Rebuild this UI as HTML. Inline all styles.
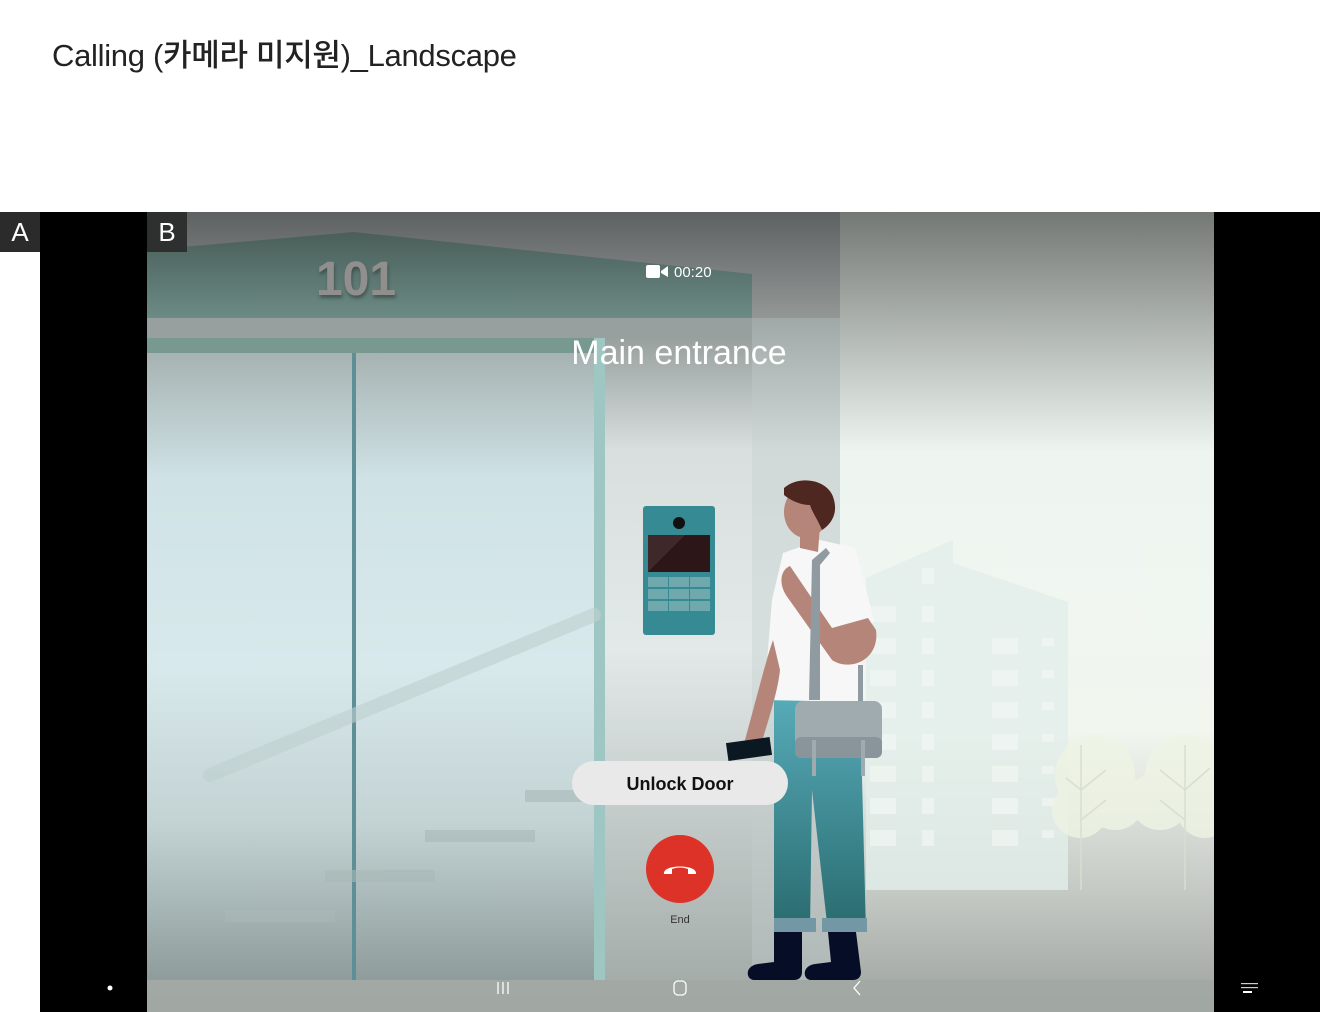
<!DOCTYPE html>
<html><head><meta charset="utf-8"><style>
html,body{margin:0;padding:0;background:#fff;width:1320px;height:1012px;overflow:hidden;font-family:"Liberation Sans","Noto Sans CJK KR",sans-serif;position:relative}
.title{position:absolute;left:52px;top:30px;font-size:31px;color:#222;font-family:"Liberation Sans","Noto Sans CJK KR",sans-serif;font-weight:500;letter-spacing:-0.3px}
.lab{position:absolute;width:40px;height:40px;background:#2b2b2b;color:#fff;font-size:26px;text-align:center;line-height:40px}
</style></head><body>
<div class="title">Calling (카메라 미지원)_Landscape</div>
<svg style="position:absolute;left:0;top:0" width="1320" height="1012" viewBox="0 0 1320 1012">
<defs>
<linearGradient id="bg" x1="0" y1="212" x2="0" y2="1012" gradientUnits="userSpaceOnUse">
<stop offset="0" stop-color="#5d6161"/><stop offset="0.3" stop-color="#d7dddb"/><stop offset="0.6" stop-color="#dfe6e4"/><stop offset="1" stop-color="#9aa09c"/></linearGradient>
<linearGradient id="right" x1="0" y1="212" x2="0" y2="1012" gradientUnits="userSpaceOnUse">
<stop offset="0" stop-color="#747875"/><stop offset="0.3" stop-color="#eef5f0"/><stop offset="0.65" stop-color="#f1f6ef"/><stop offset="0.85" stop-color="#c4c9c4"/><stop offset="1" stop-color="#9ea29e"/></linearGradient>
<linearGradient id="roof" x1="0" y1="232" x2="0" y2="318" gradientUnits="userSpaceOnUse">
<stop offset="0" stop-color="#4a5e5a"/><stop offset="1" stop-color="#6c8b84"/></linearGradient>
<linearGradient id="glass" x1="0" y1="352" x2="0" y2="980" gradientUnits="userSpaceOnUse">
<stop offset="0" stop-color="#a6b2b1"/><stop offset="0.2" stop-color="#cfe2e5"/><stop offset="0.5" stop-color="#d8e9ec"/><stop offset="0.75" stop-color="#c3d3d4"/><stop offset="1" stop-color="#8e9c9b"/></linearGradient>
<linearGradient id="wall" x1="0" y1="318" x2="0" y2="980" gradientUnits="userSpaceOnUse">
<stop offset="0" stop-color="#8d9593"/><stop offset="0.2" stop-color="#d8dfde"/><stop offset="0.5" stop-color="#e2e9e8"/><stop offset="1" stop-color="#a5adab"/></linearGradient>
<linearGradient id="pants" x1="0" y1="700" x2="0" y2="920" gradientUnits="userSpaceOnUse">
<stop offset="0" stop-color="#57aab8"/><stop offset="1" stop-color="#2b6e72"/></linearGradient>
<clipPath id="sc"><rect x="147" y="212" width="1067" height="800"/></clipPath>
<filter id="sh"><feDropShadow dx="1" dy="3" stdDeviation="1.5" flood-color="#2c3a38" flood-opacity="0.6"/></filter>
</defs>
<rect x="40" y="212" width="1280" height="800" fill="#000"/>
<g clip-path="url(#sc)">
<rect x="147" y="212" width="1067" height="800" fill="url(#bg)"/>
<rect x="840" y="212" width="374" height="768" fill="url(#right)"/>
<polygon points="866,578 953,540 953,563 1068,602 1068,890 866,890" fill="#e2eeea" opacity="0.8"/>
<g fill="#f2f7f4" opacity="0.7">
<rect x="922" y="568" width="12" height="16"/><rect x="922" y="606" width="12" height="16"/><rect x="922" y="638" width="12" height="16"/><rect x="922" y="670" width="12" height="16"/><rect x="922" y="702" width="12" height="16"/><rect x="922" y="734" width="12" height="16"/><rect x="922" y="766" width="12" height="16"/><rect x="922" y="798" width="12" height="16"/><rect x="922" y="830" width="12" height="16"/>
<rect x="992" y="638" width="26" height="16"/><rect x="992" y="670" width="26" height="16"/><rect x="992" y="702" width="26" height="16"/><rect x="992" y="734" width="26" height="16"/><rect x="992" y="766" width="26" height="16"/><rect x="992" y="798" width="26" height="16"/><rect x="992" y="830" width="26" height="16"/>
<rect x="870" y="606" width="26" height="16"/><rect x="870" y="638" width="26" height="16"/><rect x="870" y="670" width="26" height="16"/><rect x="870" y="702" width="26" height="16"/><rect x="870" y="734" width="26" height="16"/><rect x="870" y="766" width="26" height="16"/><rect x="870" y="798" width="26" height="16"/><rect x="870" y="830" width="26" height="16"/>
<rect x="1042" y="638" width="12" height="8"/><rect x="1042" y="670" width="12" height="8"/><rect x="1042" y="702" width="12" height="8"/><rect x="1042" y="734" width="12" height="8"/><rect x="1042" y="766" width="12" height="8"/><rect x="1042" y="798" width="12" height="8"/><rect x="1042" y="830" width="12" height="8"/>
</g>
<g fill="#eef4e4" opacity="0.8">
<circle cx="1095" cy="775" r="40"/><circle cx="1115" cy="800" r="30"/><circle cx="1080" cy="810" r="28"/>
<circle cx="1185" cy="775" r="40"/><circle cx="1160" cy="800" r="30"/><circle cx="1205" cy="810" r="28"/>
</g>
<g stroke="#d8dfd0" stroke-width="1.5" fill="none"><path d="M1081 745V890M1081 790l25-20M1081 820l25-20M1081 790l-15-12M1185 745V890M1185 790l-25-20M1185 820l-25-20M1185 790l25-22"/></g>
<rect x="605" y="318" width="235" height="662" fill="url(#wall)"/>
<polygon points="147,250 354,232 752,274 752,318 147,318" fill="url(#roof)"/>
<rect x="147" y="318" width="605" height="20" fill="#97a09e"/>
<rect x="752" y="318" width="88" height="662" fill="#c4cdcb" opacity="0.35"/>
<rect x="147" y="338" width="458" height="642" fill="url(#glass)"/>
<rect x="147" y="338" width="458" height="15" fill="#77998f"/>
<rect x="594" y="338" width="11" height="642" fill="#9ec6c2"/>
<rect x="352" y="353" width="4" height="627" fill="#5e8f96"/>
<g stroke="#bfd0d0" stroke-width="14" stroke-linecap="round" opacity="0.6"><path d="M210 775L594 615"/></g>
<g fill="#a9b9b8" opacity="0.6"><rect x="225" y="910" width="110" height="12"/><rect x="325" y="870" width="110" height="12"/><rect x="425" y="830" width="110" height="12"/><rect x="525" y="790" width="70" height="12"/></g>
<text x="356" y="295" font-size="48" font-weight="bold" fill="#918e8e" text-anchor="middle" font-family="Liberation Sans,sans-serif" filter="url(#sh)">101</text>
<rect x="643" y="506" width="72" height="129" rx="3" fill="#368a93"/>
<circle cx="679" cy="523" r="6" fill="#111"/>
<rect x="648" y="535" width="62" height="37" fill="#2c1617"/>
<polygon points="648,572 685,535 648,535" fill="#3e2829"/>
<g fill="#6fa9ae"><rect x="648" y="577" width="20" height="10"/><rect x="669" y="577" width="20" height="10"/><rect x="690" y="577" width="20" height="10"/><rect x="648" y="589" width="20" height="10"/><rect x="669" y="589" width="20" height="10"/><rect x="690" y="589" width="20" height="10"/><rect x="648" y="601" width="20" height="10"/><rect x="669" y="601" width="20" height="10"/><rect x="690" y="601" width="20" height="10"/></g>
<path d="M774 700 L860 700 L866 932 L828 932 L812 790 L810 930 L774 930Z" fill="url(#pants)"/>
<rect x="774" y="918" width="42" height="14" fill="#7397a5"/><rect x="822" y="918" width="45" height="14" fill="#7397a5"/>
<path d="M774 932h28v40c0 6-4 8-8 8h-40c-8 0-10-14 4-16l16-2z" fill="#060d26"/>
<path d="M828 932h28l5 40c0 6-4 8-8 8h-42c-8 0-10-14 4-16l16-2z" fill="#060d26"/>
<path d="M783 553 L820 540 L855 548 L874 620 L862 640 L860 702 L764 700 L772 600Z" fill="#f8f7f8"/>
<path d="M800 520 L820 525 L818 552 L800 548Z" fill="#b5857a"/>
<ellipse cx="806" cy="512" rx="22" ry="26" fill="#b5857a"/>
<path d="M784 488 C800 474 830 480 834 500 C838 515 830 525 822 530 C818 520 812 512 810 505 C800 505 790 500 784 495Z" fill="#4d2720"/>
<path d="M790 566 C780 570 778 585 788 598 L832 660 C850 672 880 660 876 630 L868 618 L832 628Z" fill="#b5857a"/>
<path d="M773 640 C766 660 756 700 745 740 L760 748 C770 715 778 690 780 670Z" fill="#b5857a"/>
<rect x="727" y="740" width="44" height="18" fill="#0b1822" transform="rotate(-8 749 749)"/>
<path d="M812 560 L826 548 L830 553 L820 565 L820 700 L809 700Z" fill="#8f9aa1"/>
<rect x="858" y="665" width="5" height="40" fill="#8f9aa1"/>
<rect x="795" y="701" width="87" height="57" rx="8" fill="#a0abb0"/>
<rect x="795" y="737" width="87" height="21" rx="6" fill="#8a959b"/>
<rect x="812" y="740" width="4" height="36" fill="#a0abb0"/><rect x="861" y="740" width="4" height="36" fill="#a0abb0"/>
<rect x="147" y="980" width="1067" height="32" fill="#a2a8a4" opacity="0.9"/>
</g>
<g stroke="#fff" stroke-width="1.3" fill="none"><path d="M498 982v12M503 982v12M508 982v12"/><rect x="674" y="981" width="12" height="14" rx="4"/><path d="M860 981l-6 7l6 7"/></g>
<circle cx="110" cy="988" r="2.5" fill="#fff"/>
<g fill="#fff"><rect x="1241" y="983" width="17" height="1.2" opacity="0.8"/><rect x="1241" y="987" width="17" height="1.2" opacity="0.8"/><rect x="1243" y="991" width="9" height="2"/></g>
<rect x="646" y="265" width="14" height="13" rx="2" fill="#fff"/><polygon points="661,271 668,266 668,277 661,273" fill="#fff"/>
<text x="674" y="277" font-size="15" fill="#fff" font-family="Liberation Sans,sans-serif">00:20</text>
<text x="679" y="364" font-size="34" fill="#fff" text-anchor="middle" font-family="Liberation Sans,sans-serif">Main entrance</text>
<rect x="572" y="761" width="216" height="44" rx="22" fill="#e9e9e9"/>
<text x="680" y="790" font-size="18" fill="#111" text-anchor="middle" font-weight="bold" font-family="Liberation Sans,sans-serif">Unlock Door</text>
<circle cx="680" cy="869" r="34" fill="#dd3228"/>
<path d="M664 874 C662 864 698 864 696 874 L688 874 L688 869 C682 867 678 867 672 869 L672 874Z" fill="#fff"/>
<text x="680" y="923" font-size="11" fill="#333" text-anchor="middle" font-family="Liberation Sans,sans-serif">End</text>
</svg>
<div class="lab" style="left:0;top:212px">A</div>
<div class="lab" style="left:147px;top:212px;background:#2e3030">B</div>
</body></html>
